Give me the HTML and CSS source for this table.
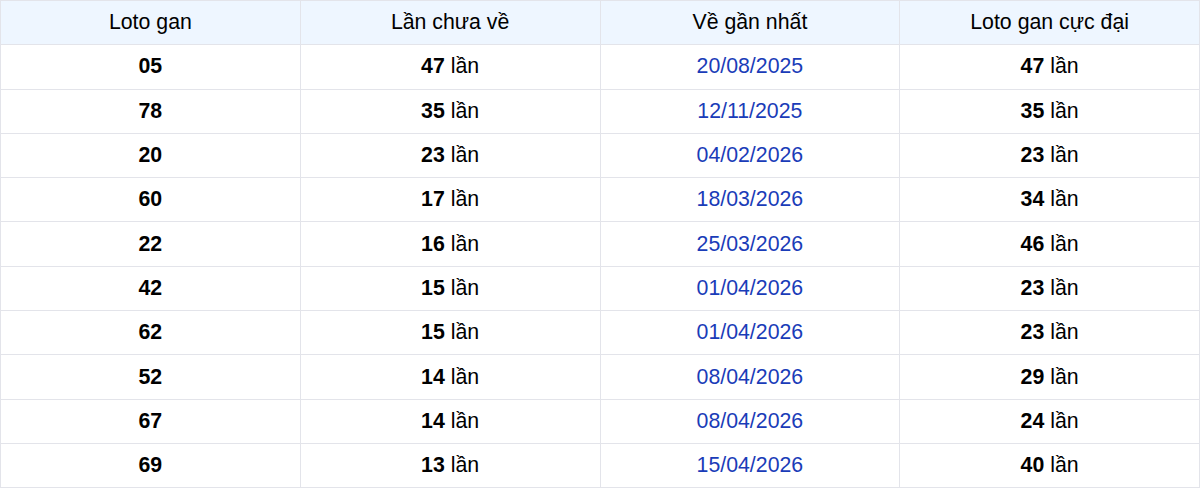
FILE: index.html
```html
<!DOCTYPE html>
<html lang="vi">
<head>
<meta charset="utf-8">
<link rel="stylesheet" href="styles.css">
</head>
<body>
<table class="gan">
  <thead>
    <tr><th>Loto gan</th><th>Lần chưa về</th><th>Về gần nhất</th><th>Loto gan cực đại</th></tr>
  </thead>
  <tbody>
    <tr><td><b>05</b></td><td><b>47</b> lần</td><td class="date">20/08/2025</td><td><b>47</b> lần</td></tr>
    <tr><td><b>78</b></td><td><b>35</b> lần</td><td class="date">12/11/2025</td><td><b>35</b> lần</td></tr>
    <tr><td><b>20</b></td><td><b>23</b> lần</td><td class="date">04/02/2026</td><td><b>23</b> lần</td></tr>
    <tr><td><b>60</b></td><td><b>17</b> lần</td><td class="date">18/03/2026</td><td><b>34</b> lần</td></tr>
    <tr><td><b>22</b></td><td><b>16</b> lần</td><td class="date">25/03/2026</td><td><b>46</b> lần</td></tr>
    <tr><td><b>42</b></td><td><b>15</b> lần</td><td class="date">01/04/2026</td><td><b>23</b> lần</td></tr>
    <tr><td><b>62</b></td><td><b>15</b> lần</td><td class="date">01/04/2026</td><td><b>23</b> lần</td></tr>
    <tr><td><b>52</b></td><td><b>14</b> lần</td><td class="date">08/04/2026</td><td><b>29</b> lần</td></tr>
    <tr><td><b>67</b></td><td><b>14</b> lần</td><td class="date">08/04/2026</td><td><b>24</b> lần</td></tr>
    <tr><td><b>69</b></td><td><b>13</b> lần</td><td class="date">15/04/2026</td><td><b>40</b> lần</td></tr>
  </tbody>
</table>
</body>
</html>
```
FILE: styles.css
```css
html, body {
  margin: 0;
  padding: 0;
  background: #ffffff;
}
body {
  font-family: "Liberation Sans", Arial, sans-serif;
  color: #000000;
}
.gan {
  width: 1200px;
  border-collapse: collapse;
  table-layout: fixed;
  font-size: 21.3px;
}
.gan th, .gan td {
  border: 1.5px solid #e3e4ea;
  text-align: center;
  vertical-align: middle;
  height: 44.3px;
  padding: 0;
  box-sizing: border-box;
}
.gan th {
  background: #eef6ff;
  font-weight: normal;
}
.gan td b {
  font-weight: bold;
}
.gan td.date {
  color: #1a3cb8;
}
```
